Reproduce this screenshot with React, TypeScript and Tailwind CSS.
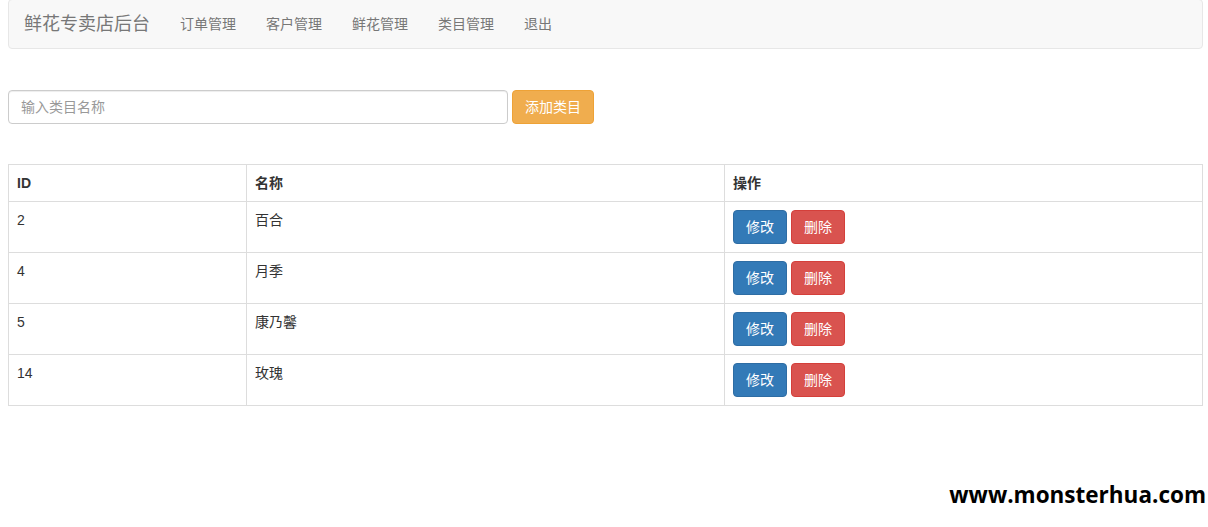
import React from "react";

const rows = [
  { id: "2", name: "百合" },
  { id: "4", name: "月季" },
  { id: "5", name: "康乃馨" },
  { id: "14", name: "玫瑰" },
];

const font = { fontFamily: '"Liberation Sans", "Noto Sans CJK SC", sans-serif' };

export default function App() {
  return (
    <div className="relative min-h-[527px] bg-white text-[14px] text-[#333]" style={font}>
      <nav className="mx-[8px] -mt-px flex h-[50px] w-[1195px] items-center rounded-[4px] border border-[#e7e7e7] bg-[#f8f8f8]">
        <span className="px-[15px] text-[18px] leading-[20px] text-[#777]">鲜花专卖店后台</span>
        <ul className="flex">
          {["订单管理", "客户管理", "鲜花管理", "类目管理", "退出"].map((t) => (
            <li key={t} className="px-[15px] leading-[20px] text-[#777]">
              {t}
            </li>
          ))}
        </ul>
      </nav>

      <div className="mx-[8px] mt-[41px] flex items-center gap-[4px]">
        <input
          className="h-[34px] w-[500px] rounded-[4px] border border-[#ccc] px-[12px] text-[14px] text-[#555] shadow-[inset_0_1px_1px_rgba(0,0,0,0.075)] outline-none placeholder:text-[#999]"
          placeholder="输入类目名称"
          style={font}
        />
        <button className="h-[34px] w-[82px] rounded-[4px] border border-[#eea236] bg-[#f0ad4e] text-[14px] text-white">
          添加类目
        </button>
      </div>

      <table className="mx-[8px] mt-[40px] w-[1195px] border-collapse border border-[#ddd]">
        <colgroup>
          <col className="w-[238px]" />
          <col className="w-[478px]" />
          <col />
        </colgroup>
        <thead>
          <tr>
            <th className="border border-[#ddd] p-[8px] text-left align-bottom leading-[20px] font-bold">ID</th>
            <th className="border border-[#ddd] p-[8px] text-left align-bottom leading-[20px] font-bold">名称</th>
            <th className="border border-[#ddd] p-[8px] text-left align-bottom leading-[20px] font-bold">操作</th>
          </tr>
        </thead>
        <tbody>
          {rows.map((r) => (
            <tr key={r.id}>
              <td className="border border-[#ddd] p-[8px] align-top leading-[20px]">{r.id}</td>
              <td className="border border-[#ddd] p-[8px] align-top leading-[20px]">{r.name}</td>
              <td className="border border-[#ddd] p-[8px] align-top leading-[20px]">
                <div className="flex gap-[4px]">
                  <button className="h-[34px] w-[54px] rounded-[4px] border border-[#2e6da4] bg-[#337ab7] text-[14px] text-white">
                    修改
                  </button>
                  <button className="h-[34px] w-[54px] rounded-[4px] border border-[#d43f3a] bg-[#d9534f] text-[14px] text-white">
                    删除
                  </button>
                </div>
              </td>
            </tr>
          ))}
        </tbody>
      </table>

      <div
        className="absolute right-[2px] top-[481px] text-[22.5px] font-bold leading-[30px] text-black"
        style={{ fontFamily: '"Open Sans", sans-serif' }}
      >
        www.monsterhua.com
      </div>
    </div>
  );
}
